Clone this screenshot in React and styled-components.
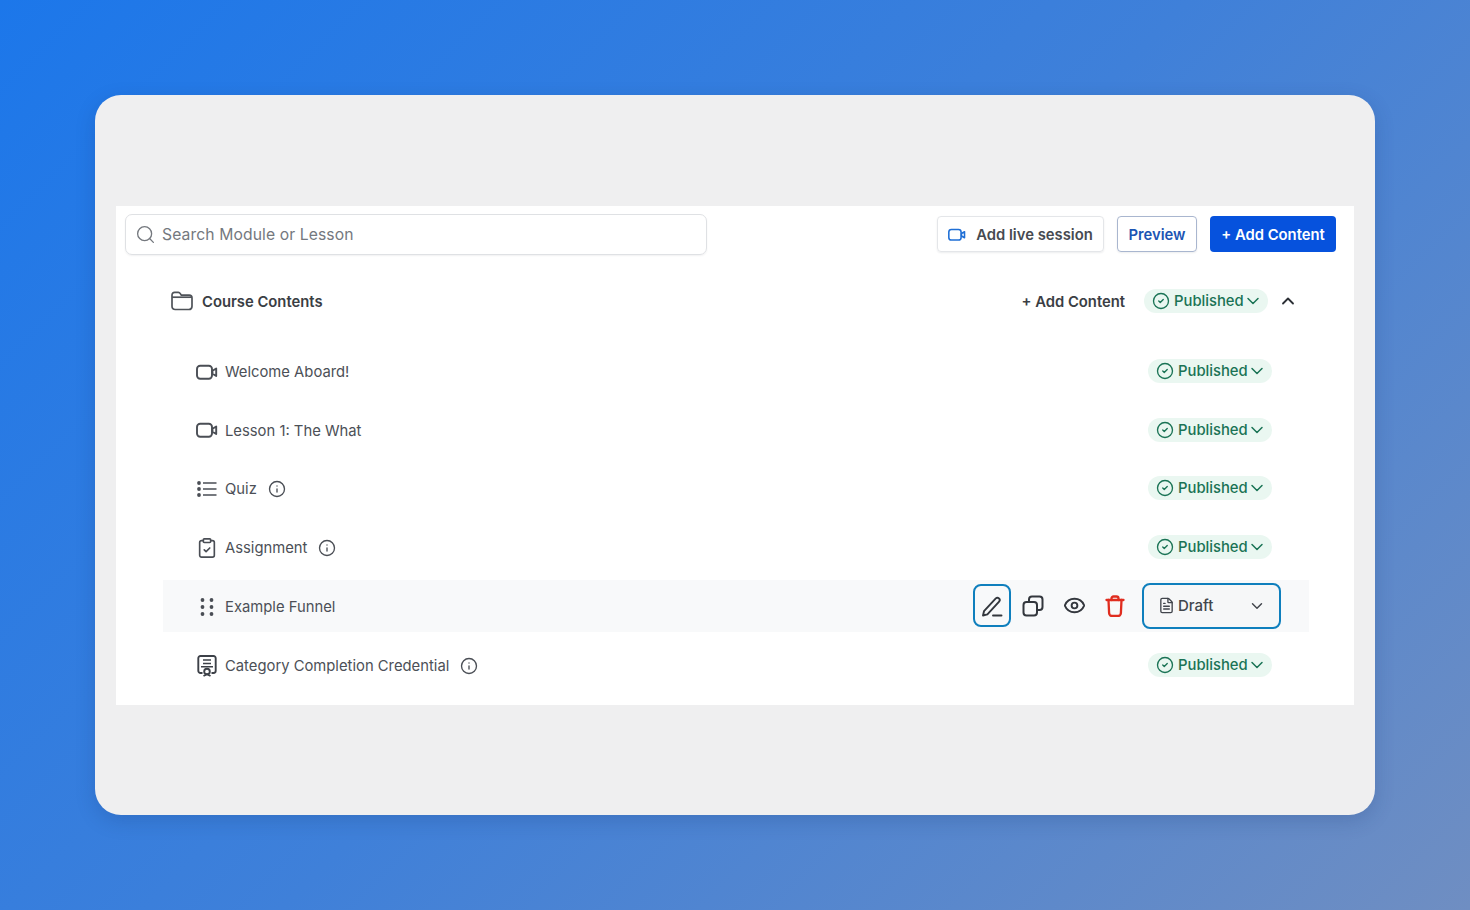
import styled, { createGlobalStyle } from "styled-components";
import { ChevronDown, ChevronUp, CircleCheck, ClipboardCheck, Eye, FileText, Info, Search } from "lucide-react";

const Global = createGlobalStyle`
  html, body { margin: 0; height: 100%; }
  body {
    font-family: Inter, "Liberation Sans", sans-serif;
    background: linear-gradient(135deg, #1c77ea 0%, #3f80d9 50%, #6f8ec2 100%);
  }
`;

const Page = styled.div`
  height: 910px;
  display: flex;
  align-items: center;
  justify-content: center;
`;

const Card = styled.div`
  width: 1280px;
  height: 720px;
  box-sizing: border-box;
  padding: 111px 21px 0;
  background: #efeff0;
  border-radius: 26px;
  box-shadow: 0 6px 20px rgba(20, 50, 110, 0.2);
`;

const Panel = styled.div`
  height: 499px;
  box-sizing: border-box;
  padding-top: 8px;
  background: #fff;
`;

const Toolbar = styled.div`
  display: flex;
  align-items: center;
  justify-content: space-between;
  padding: 0 18px 0 9px;
`;

const SearchBox = styled.div`
  width: 582px;
  height: 41px;
  box-sizing: border-box;
  display: flex;
  align-items: center;
  gap: 6px;
  padding: 0 0 1px 9px;
  border: 1px solid #dfe1e4;
  border-radius: 7px;
  box-shadow: 0 1px 2px rgba(16, 24, 40, 0.06);
  color: #74787e;
  font-size: 15.7px;
  letter-spacing: 0.1px;
`;

const Buttons = styled.div`
  display: flex;
  gap: 13px;
  margin-bottom: 2px;
`;

const Button = styled.div`
  height: 36px;
  box-sizing: border-box;
  display: flex;
  align-items: center;
  justify-content: center;
  padding-top: 2px;
  border-radius: 4px;
  font-size: 14.8px;
  font-weight: 600;
  white-space: nowrap;
`;

const LiveButton = styled(Button)`
  width: 167px;
  gap: 10px;
  border: 1px solid #e4e6e9;
  color: #464a51;
  box-shadow: 0 1px 2px rgba(16, 24, 40, 0.08);
`;

const PreviewButton = styled(Button)`
  width: 80px;
  border: 1px solid #a9b6cf;
  color: #1c55b4;
  box-shadow: 0 1px 2px rgba(16, 24, 40, 0.08);
`;

const PrimaryButton = styled(Button)`
  width: 126px;
  background: #0652dd;
  color: #fff;
`;

const CourseHeader = styled.div`
  height: 48px;
  margin-top: 22px;
  display: flex;
  align-items: center;
  padding: 0 56px 0 55px;
  color: #3a3e44;
`;

const CourseTitle = styled.div`
  margin-left: 9px;
  padding-top: 2px;
  font-size: 14.8px;
  font-weight: 600;
`;

const AddContent = styled.div`
  margin-left: auto;
  margin-right: 19px;
  padding-top: 2px;
  font-size: 14.8px;
  font-weight: 600;
`;

const Pill = styled.div`
  width: 124px;
  height: 24px;
  box-sizing: border-box;
  display: flex;
  align-items: center;
  gap: 4px;
  margin: 0 ${(p) => p.$inset}px ${(p) => (p.$inset ? 2 : 0)}px 0;
  padding-left: 8px;
  border-radius: 12px;
  background: #eaf7f1;
  color: #1a7355;
  font-size: 14.8px;
  font-weight: 500;
  svg:last-child { margin-left: -5px; }
`;

const Collapse = styled.div`
  display: flex;
  margin-left: 10px;
  color: #2b2f35;
`;

const Rows = styled.div`
  display: flex;
  flex-direction: column;
  gap: 6.8px;
  margin: 20.3px 45px 0 47px;
`;

const Row = styled.div`
  height: 52px;
  box-sizing: border-box;
  display: flex;
  align-items: center;
  padding: 1px 28px 0 33px;
  background: ${(p) => (p.$active ? "#f8f9fa" : "transparent")};
  color: #4c5057;
  font-size: 14.8px;
`;

const RowIcon = styled.div`
  width: 22px;
  display: flex;
  justify-content: center;
  margin-right: 7px;
  color: #4a4e55;
`;

const RowInfo = styled.div`
  display: flex;
  margin-left: 11px;
  color: #4a4e55;
`;

const Actions = styled.div`
  margin-left: auto;
  display: flex;
  align-items: center;
`;

const ActionButton = styled.div`
  width: 38px;
  height: 43px;
  box-sizing: border-box;
  display: flex;
  align-items: center;
  justify-content: center;
  margin: 0 3px 2px 0;
  border-radius: 8px;
  border: ${(p) => (p.$focus ? "2px solid #0f7fbd" : "none")};
  color: #33373d;
`;

const Select = styled.div`
  width: 139px;
  height: 46px;
  box-sizing: border-box;
  display: flex;
  align-items: center;
  gap: 3px;
  margin: 0 0 2px 5px;
  padding: 0 13px 0 14px;
  border: 2px solid #0f7fbd;
  border-radius: 8px;
  background: #f6f7f8;
  color: #41454c;
  font-size: 15px;
  font-weight: 500;
  svg:last-child { margin-left: auto; }
`;

const VideoIcon = ({ size = 22, color = "currentColor" }) => (
  <svg width={size} height={size * 0.75} viewBox="0 0 22 16" fill="none" stroke={color} strokeWidth="1.900">
    <rect x="1" y="1.5" width="15" height="13" rx="3.2" />
    <path d="M16.5 6.5 20.2 4.300v7.400L16.500 9.500z" strokeLinejoin="round" />
  </svg>
);

const FolderIcon = () => (
  <svg width="22" height="20" viewBox="0 0 22 20" fill="none" stroke="#4f5359" strokeWidth="1.7">
    <path d="M1 4.200C1 2.400 2 1.400 3.600 1.400h3.700c1 0 1.500.4 2 1.200l1 1.600h7.900c1.600 0 2.800 1.100 2.800 2.800v8.200c0 2-1.200 3.300-3.200 3.300H4.200C2.200 18.500 1 17.200 1 15.200z" />
    <path d="M1 6.200h20" />
  </svg>
);

const ListIcon = () => (
  <svg width="20" height="18" viewBox="0 0 20 18" fill="#4a4e55">
    <circle cx="2" cy="3" r="1.900" />
    <circle cx="2" cy="9" r="1.900" />
    <circle cx="2" cy="15" r="1.900" />
    <path d="M6 3h13.500M6 9h13.500M6 15h13.500" stroke="#4a4e55" strokeWidth="1.700" />
  </svg>
);

const GripIcon = () => (
  <svg width="16" height="20" viewBox="0 0 16 20" fill="currentColor">
    <circle cx="3.500" cy="3" r="1.900" />
    <circle cx="12.500" cy="3" r="1.900" />
    <circle cx="3.500" cy="10" r="1.900" />
    <circle cx="12.500" cy="10" r="1.900" />
    <circle cx="3.500" cy="17" r="1.900" />
    <circle cx="12.500" cy="17" r="1.900" />
  </svg>
);

const CredentialIcon = () => (
  <svg width="20" height="22" viewBox="0 0 20 22" fill="none" stroke="#3d4148" strokeWidth="1.900">
    <path d="M5.500 18H3.500A2.200 2.200 0 0 1 1.300 15.800V3.200A2.200 2.200 0 0 1 3.500 1h13a2.200 2.200 0 0 1 2.200 2.200v12.600a2.200 2.200 0 0 1-2.200 2.200H14.500" />
    <path d="M6 5h8M6 8.500h8M4 11.800h12" strokeWidth="1.600" />
    <circle cx="10" cy="16.500" r="2.800" />
    <path d="M6.500 21 10 19.200 13.500 21" />
  </svg>
);

const PenIcon = () => (
  <svg width="22" height="22" viewBox="0 0 22 22" fill="none" stroke="currentColor" strokeWidth="1.900" strokeLinecap="round" strokeLinejoin="round">
    <path d="M3 16.200 14.800 3.400a2.300 2.300 0 0 1 3.300 3.200L6.400 19.400 2 20.500z" />
    <path d="M12 20.500h8.500" />
  </svg>
);

const CopyIcon = () => (
  <svg width="22" height="22" viewBox="0 0 22 22" fill="none" stroke="currentColor" strokeWidth="2" strokeLinejoin="round">
    <rect x="1.500" y="7" width="13.500" height="13.500" rx="3" />
    <path d="M7 7V4.500a3 3 0 0 1 3-3h7.500a3 3 0 0 1 3 3V12a3 3 0 0 1-3 3H15" />
  </svg>
);

const TrashIcon = () => (
  <svg width="20" height="22" viewBox="0 0 20 22" fill="none" stroke="#e02d1f" strokeWidth="2.300" strokeLinecap="round" strokeLinejoin="round">
    <path d="M1.500 5h17" />
    <path d="M6.500 5V3.500a2 2 0 0 1 2-2h3a2 2 0 0 1 2 2V5" />
    <path d="M3.500 5l.6 13a3 3 0 0 0 3 3h5.800a3 3 0 0 0 3-3l.6-13" />
  </svg>
);

const Status = ({ inset = 9 }) => (
  <Pill $inset={inset}>
    <CircleCheck size={18} strokeWidth={1.8} />
    Published
    <ChevronDown size={20} strokeWidth={1.8} />
  </Pill>
);

const lessons = [
  { title: "Welcome Aboard!", icon: <VideoIcon /> },
  { title: "Lesson 1: The What", icon: <VideoIcon /> },
  { title: "Quiz", icon: <ListIcon />, info: true },
  { title: "Assignment", icon: <ClipboardCheck size={22} strokeWidth={1.8} />, info: true },
  { title: "Example Funnel", icon: <GripIcon />, active: true },
  { title: "Category Completion Credential", icon: <CredentialIcon />, info: true },
];

export default function App() {
  return (
    <Page>
      <Global />
      <Card>
        <Panel>
          <Toolbar>
            <SearchBox>
              <Search size={21} strokeWidth={1.5} />
              Search Module or Lesson
            </SearchBox>
            <Buttons>
              <LiveButton>
                <VideoIcon size={18} color="#1f6fd6" />
                Add live session
              </LiveButton>
              <PreviewButton>Preview</PreviewButton>
              <PrimaryButton>+ Add Content</PrimaryButton>
            </Buttons>
          </Toolbar>
          <CourseHeader>
            <FolderIcon />
            <CourseTitle>Course Contents</CourseTitle>
            <AddContent>+ Add Content</AddContent>
            <Status inset={0} />
            <Collapse>
              <ChevronUp size={20} strokeWidth={2.2} />
            </Collapse>
          </CourseHeader>
          <Rows>
            {lessons.map((l) => (
              <Row key={l.title} $active={l.active}>
                <RowIcon>{l.icon}</RowIcon>
                {l.title}
                {l.info && (
                  <RowInfo>
                    <Info size={18} strokeWidth={1.8} />
                  </RowInfo>
                )}
                <Actions>
                  {l.active ? (
                    <>
                      <ActionButton $focus>
                        <PenIcon />
                      </ActionButton>
                      <ActionButton>
                        <CopyIcon />
                      </ActionButton>
                      <ActionButton>
                        <Eye size={23} strokeWidth={2} />
                      </ActionButton>
                      <ActionButton>
                        <TrashIcon />
                      </ActionButton>
                      <Select>
                        <FileText size={17} strokeWidth={1.9} />
                        Draft
                        <ChevronDown size={18} strokeWidth={1.9} />
                      </Select>
                    </>
                  ) : (
                    <Status />
                  )}
                </Actions>
              </Row>
            ))}
          </Rows>
        </Panel>
      </Card>
    </Page>
  );
}
